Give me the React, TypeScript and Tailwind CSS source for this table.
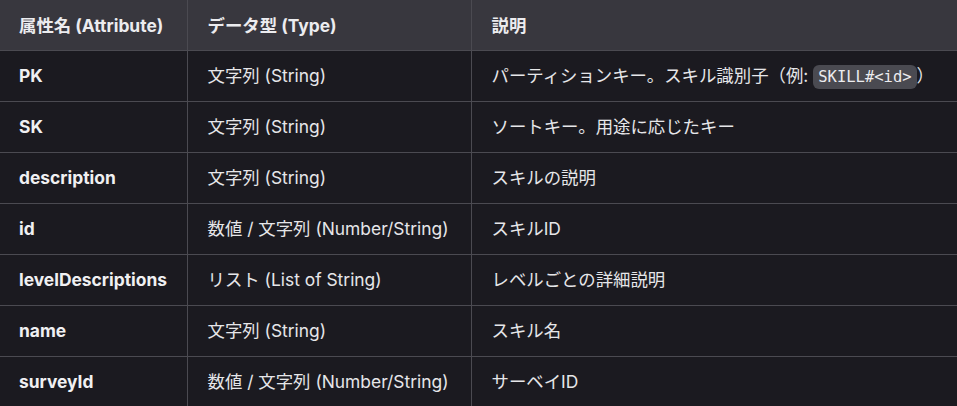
const rows: { attr: string; type: string; desc: React.ReactNode }[] = [
  {
    attr: "PK",
    type: "文字列 (String)",
    desc: (
      <>
        パーティションキー。スキル識別子（例:{" "}
        <code className="rounded-md bg-[#4a4a51] px-[5px] py-[3px] font-['DejaVu_Sans_Mono',monospace] text-[15.5px] text-[#ececef]">
          SKILL#&lt;id&gt;
        </code>
        ）
      </>
    ),
  },
  { attr: "SK", type: "文字列 (String)", desc: "ソートキー。用途に応じたキー" },
  { attr: "description", type: "文字列 (String)", desc: "スキルの説明" },
  { attr: "id", type: "数値 / 文字列 (Number/String)", desc: "スキルID" },
  { attr: "levelDescriptions", type: "リスト (List of String)", desc: "レベルごとの詳細説明" },
  { attr: "name", type: "文字列 (String)", desc: "スキル名" },
  { attr: "surveyId", type: "数値 / 文字列 (Number/String)", desc: "サーベイID" },
];

export default function App() {
  return (
    <div className="h-[406px] w-[957px] overflow-hidden bg-[#1b1a20] font-['Inter','Noto_Sans_CJK_JP',sans-serif] text-[17.4px]">
      <table className="w-[957px] table-fixed border-collapse">
        <colgroup>
          <col className="w-[187px]" />
          <col className="w-[284px]" />
          <col />
        </colgroup>
        <thead>
          <tr className="h-[50px] border-b border-[#4b4a51] bg-[#38373e] text-left text-[#ececef]">
            <th className="border-r border-[#4b4a51] pl-[19px] pr-1 pt-[2px] font-bold">属性名 (Attribute)</th>
            <th className="border-r border-[#4b4a51] pl-5 pr-1 pt-[2px] font-bold">データ型 (Type)</th>
            <th className="pl-5 pt-[2px] font-bold">説明</th>
          </tr>
        </thead>
        <tbody>
          {rows.map((r) => (
            <tr key={r.attr} className="h-[51px] border-b border-[#4b4a51] text-[#e6e6e9]">
              <td className="border-r border-[#4b4a51] pl-[19px] pr-1 pt-[2px] font-bold text-[#f0f0f2]">{r.attr}</td>
              <td className="border-r border-[#4b4a51] pl-5 pr-1 pt-[2px]">{r.type}</td>
              <td className="whitespace-nowrap pl-5 pt-[2px]">{r.desc}</td>
            </tr>
          ))}
        </tbody>
      </table>
    </div>
  );
}
